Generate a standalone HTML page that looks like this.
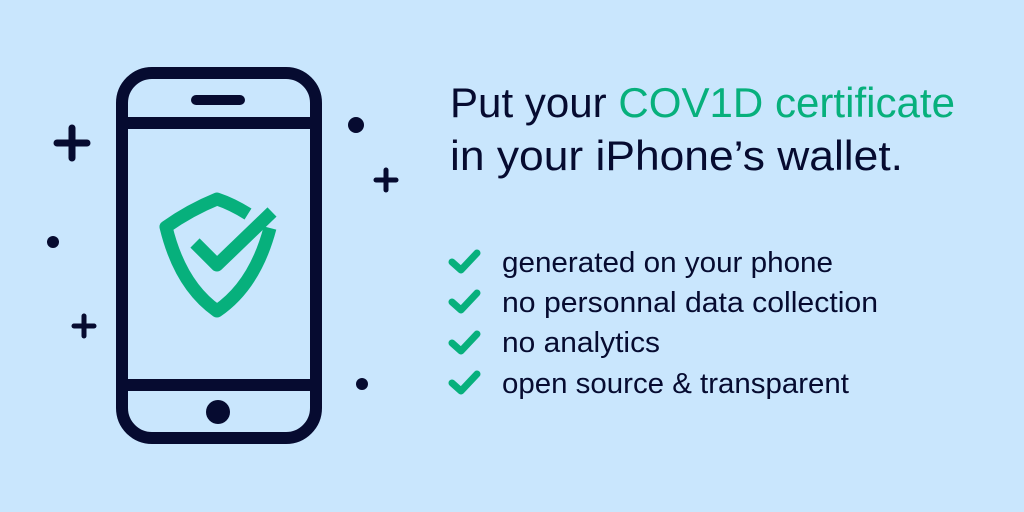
<!DOCTYPE html>
<html><head><meta charset="utf-8"><style>html,body{margin:0;padding:0;background:#c9e6fd;}svg{display:block}</style></head><body>
<svg width="1024" height="512" viewBox="0 0 1024 512" xmlns="http://www.w3.org/2000/svg">
<rect width="1024" height="512" fill="#c9e6fd"/>
<g stroke="#060b30" fill="none" stroke-linecap="round">
<rect x="122" y="73" width="194" height="365" rx="30" stroke-width="12"/>
<line x1="122" y1="123" x2="316" y2="123" stroke-width="12" stroke-linecap="butt"/>
<line x1="122" y1="385" x2="316" y2="385" stroke-width="12" stroke-linecap="butt"/>
<line x1="196" y1="100" x2="240" y2="100" stroke-width="10"/>
<line x1="57" y1="143" x2="87" y2="143" stroke-width="7"/>
<line x1="72" y1="128" x2="72" y2="158" stroke-width="7"/>
<line x1="376" y1="180" x2="396" y2="180" stroke-width="5"/>
<line x1="386" y1="170" x2="386" y2="190" stroke-width="5"/>
<line x1="74" y1="326" x2="94" y2="326" stroke-width="5"/>
<line x1="84" y1="316" x2="84" y2="336" stroke-width="5"/>
</g>
<g fill="#060b30">
<circle cx="218" cy="412" r="12"/>
<circle cx="356" cy="125" r="8"/>
<circle cx="53" cy="242" r="6"/>
<circle cx="362" cy="384" r="6"/>
</g>
<g stroke="#07b07c" fill="none" stroke-width="13" stroke-linejoin="round">
<path d="M248,214 Q232,204 217,199 Q190,210 166,227 Q180,285 217,311 Q255,285 270,228"/>
<path d="M195,243 L217,265 L272,212" stroke-linejoin="round"/>
</g>
<g font-family="'Liberation Sans', sans-serif" fill="#060b30">
<text x="450" y="117" font-size="42" textLength="505" lengthAdjust="spacingAndGlyphs">Put your <tspan fill="#07b07c">COV1D certificate</tspan></text>
<text x="450" y="170" font-size="42" textLength="453" lengthAdjust="spacingAndGlyphs">in your iPhone’s wallet.</text>
<text x="502" y="272" font-size="29" textLength="331" lengthAdjust="spacingAndGlyphs">generated on your phone</text>
<text x="502" y="312" font-size="29" textLength="376" lengthAdjust="spacingAndGlyphs">no personnal data collection</text>
<text x="502" y="352" font-size="29" textLength="158" lengthAdjust="spacingAndGlyphs">no analytics</text>
<text x="502" y="393" font-size="29" textLength="347" lengthAdjust="spacingAndGlyphs">open source &amp; transparent</text>
</g>
<g stroke="#07b07c" fill="none" stroke-width="7" stroke-linecap="round" stroke-linejoin="round">
<path d="M452,262 L461,270 L477,253"/>
<path d="M452,302 L461,310 L477,293"/>
<path d="M452,343 L461,351 L477,334"/>
<path d="M452,383 L461,391 L477,374"/>
</g>
</svg>
</body></html>
